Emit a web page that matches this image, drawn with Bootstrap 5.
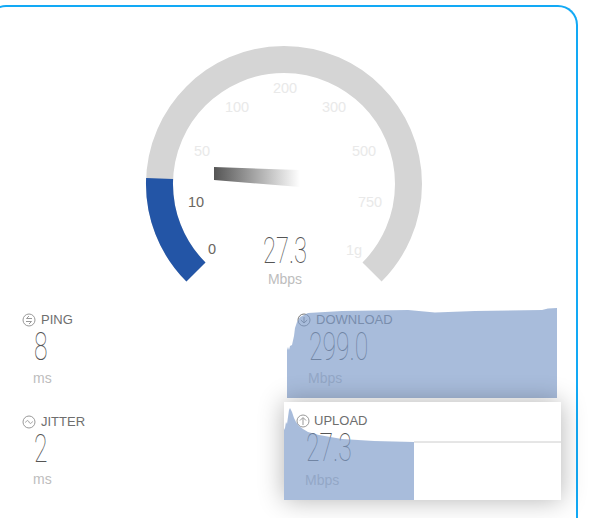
<!DOCTYPE html>
<html lang="en">
<head>
    <meta charset="UTF-8">
    <meta name="viewport" content="width=device-width, initial-scale=1.0">
    <title>Speed Test</title>
    <link rel="stylesheet" href="https://cdn.jsdelivr.net/npm/bootstrap@5.3.0/dist/css/bootstrap.min.css">
    <style>
        html, body {
            height: 518px;
            overflow: hidden;
            background: #fff;
        }

        body {
            font-family: "Liberation Sans", Arial, sans-serif;
            padding-top: 5px;
        }

        .speed-panel {
            width: 592px;
            height: 513px;
            margin-left: -14px;
            border: 2px solid #12a9f5;
            border-bottom: 0;
            border-radius: 20px 20px 0 0;
        }

        .gauge-wrap {
            height: 301px;
        }

        .gauge-wrap svg {
            display: block;
        }

        .gauge-label {
            font-family: "Liberation Sans", Arial, sans-serif;
            font-size: 14.5px;
            fill: #e9e9e9;
            text-anchor: middle;
        }

        .gauge-label.on {
            fill: #6b6660;
        }

        .gauge-value {
            font-family: "Roboto", sans-serif;
            font-weight: 100;
            font-size: 36px;
            fill: #555;
            text-anchor: middle;
        }

        .gauge-unit {
            font-family: "Liberation Sans", Arial, sans-serif;
            font-size: 14px;
            fill: #bdbdbd;
            text-anchor: middle;
        }

        .stat-grid {
            display: grid;
            grid-template-columns: 275px 270px;
            row-gap: 4px;
            padding-left: 24px;
        }

        .stat-tile {
            position: relative;
            height: 90px;
        }

        .stat-title {
            display: flex;
            align-items: center;
            gap: 5px;
            padding: 2px 0 0 10px;
            height: 19px;
            box-sizing: content-box;
            font-size: 13px;
            line-height: 14px;
            color: #6e6e6e;
        }

        .stat-title svg {
            flex: none;
        }

        .stat-num {
            padding-left: 22px;
            height: 36px;
            font-family: "Roboto", sans-serif;
            font-weight: 100;
            font-size: 38px;
            line-height: 36px;
            color: #555;
        }

        .stat-num span {
            display: inline-block;
            transform: scaleX(.65);
            transform-origin: left center;
        }

        .stat-unit {
            padding-left: 21px;
            margin-top: 5px;
            font-size: 14px;
            line-height: 16px;
            color: #bdbdbd;
        }

        .stat-chart {
            position: absolute;
            left: 0;
            top: 0;
            width: 100%;
            height: 100%;
            pointer-events: none;
        }

        .tile-jitter .stat-title {
            padding-top: 10px;
        }

        .tile-jitter .stat-unit {
            margin-top: 4px;
        }

        .tile-upload {
            background: #fff;
            box-shadow: 0 0 24px rgba(0, 0, 0, .3);
            margin: 0 -4px 0 -3px;
            height: 98px;
        }

        .tile-upload .stat-title {
            padding: 10px 0 0 12px;
            height: 18px;
            gap: 4px;
        }

        .tile-upload .stat-unit {
            margin-top: 6px;
        }
    </style>
</head>
<body>

<div class="speed-panel">
    <div class="gauge-wrap">
        <svg width="590" height="301" viewBox="-12 7 590 301">
            <defs>
                <linearGradient id="needleFade" x1="0" x2="1" y1="0" y2="0">
                    <stop offset="0" stop-color="#555"/>
                    <stop offset="1" stop-color="#555" stop-opacity="0"/>
                </linearGradient>
            </defs>
            <!-- track -->
            <path d="M 195.96 272.04 A 124.500 124.500 0 1 1 372.04 272.04" fill="none" stroke="#d5d5d5" stroke-width="27"/>
            <!-- current value -->
            <path d="M 195.96 272.04 A 124.500 124.500 0 0 1 159.6 178.500" fill="none" stroke="#2355a6" stroke-width="27"/>
            <polygon points="214,167 300,170 300,187 214,180" fill="url(#needleFade)"/>
            <text class="gauge-label on" x="212" y="254">0</text>
            <text class="gauge-label on" x="196" y="207">10</text>
            <text class="gauge-label" x="202" y="156">50</text>
            <text class="gauge-label" x="237" y="112">100</text>
            <text class="gauge-label" x="285" y="93">200</text>
            <text class="gauge-label" x="334" y="112">300</text>
            <text class="gauge-label" x="364" y="156">500</text>
            <text class="gauge-label" x="370" y="207">750</text>
            <text class="gauge-label" x="354" y="255">1g</text>
            <text class="gauge-value" x="285" y="263" textLength="44" lengthAdjust="spacingAndGlyphs">27.3</text>
            <text class="gauge-unit" x="285" y="284">Mbps</text>
        </svg>
    </div>

    <div class="stat-grid">
        <div class="stat-tile">
            <div class="stat-title">
                <svg width="14" height="14" viewBox="0 0 14 14" fill="none" stroke="#999" stroke-width="1"><circle cx="7" cy="7" r="6"/><path d="M10 5.500H4.500l2.500-2.500M4 8.500h5.500L7 11"/></svg>
                PING
            </div>
            <div class="stat-num"><span>8</span></div>
            <div class="stat-unit">ms</div>
        </div>
        <div class="stat-tile">
            <div class="stat-title">
                <svg width="14" height="14" viewBox="0 0 14 14" fill="none" stroke="#777" stroke-width="1"><circle cx="7" cy="7" r="6"/><path d="M3.800 7 7 10 10.200 7M7 4v6"/></svg>
                DOWNLOAD
            </div>
            <div class="stat-num"><span>299.0</span></div>
            <div class="stat-unit">Mbps</div>
            <svg class="stat-chart" viewBox="0 0 270 90" preserveAspectRatio="none">
                <path d="M0 90V42L1 39 2 42 3 38 5 37 7 28 8 20 10 14 13 9 21 5 55 3 121 2 148 4.500 188 3 255 2 261 .5 270 0V90Z" fill="#7f9cca" fill-opacity=".68"/>
            </svg>
        </div>
        <div class="stat-tile tile-jitter">
            <div class="stat-title">
                <svg width="14" height="14" viewBox="0 0 14 14" fill="none" stroke="#999" stroke-width="1"><circle cx="7" cy="7" r="6"/><path d="M3.500 7.500C5 5 6 5 7 7s2 2 3.500-.5"/></svg>
                JITTER
            </div>
            <div class="stat-num"><span>2</span></div>
            <div class="stat-unit">ms</div>
        </div>
        <div class="stat-tile tile-upload">
            <div class="stat-title">
                <svg width="14" height="14" viewBox="0 0 14 14" fill="none" stroke="#999" stroke-width="1"><circle cx="7" cy="7" r="6"/><path d="M7 11V4M4 6.500 7 3.500 10 6.500"/></svg>
                UPLOAD
            </div>
            <div class="stat-num"><span>27.3</span></div>
            <div class="stat-unit">Mbps</div>
            <svg class="stat-chart" viewBox="0 0 277 98" preserveAspectRatio="none">
                <path d="M130 40H277" stroke="#ccc" fill="none"/>
                <path d="M0 98V28L1 26 2 20 3 22 5 8 6 6 8 10 10 16 12 20 15 24 19 27 24 30 35 33 58 37 90 39 130 40V98Z" fill="#7f9cca" fill-opacity=".68"/>
            </svg>
        </div>
    </div>
</div>

<script src="https://cdn.jsdelivr.net/npm/bootstrap@5.3.0/dist/js/bootstrap.bundle.min.js"></script>
</body>
</html>
